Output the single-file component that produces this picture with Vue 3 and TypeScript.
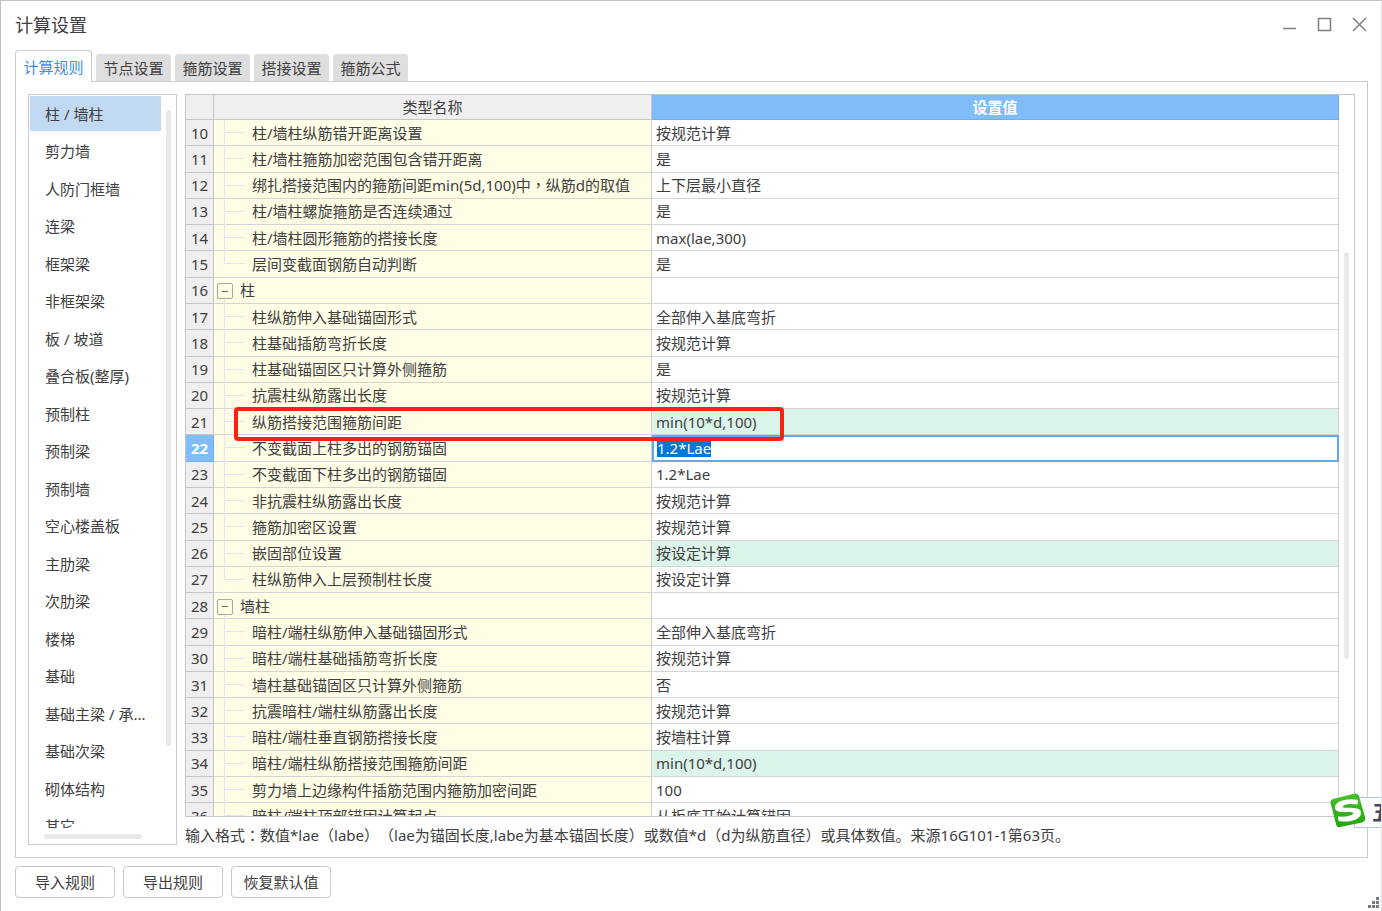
<script setup lang="ts">
import { nextTick, onMounted, ref } from 'vue'

interface Row {
  no: number
  name: string
  value: string
  group?: boolean
  last?: boolean
  changed?: boolean
}

const tabs = ['计算规则', '节点设置', '箍筋设置', '搭接设置', '箍筋公式']
const activeTab = ref(0)

const categories = [
  '柱 / 墙柱', '剪力墙', '人防门框墙', '连梁', '框架梁', '非框架梁', '板 / 坡道',
  '叠合板(整厚)', '预制柱', '预制梁', '预制墙', '空心楼盖板', '主肋梁', '次肋梁',
  '楼梯', '基础', '基础主梁 / 承...', '基础次梁', '砌体结构', '其它',
]
const activeCategory = ref(0)

const rows = ref<Row[]>([
  { no: 10, name: '柱/墙柱纵筋错开距离设置', value: '按规范计算' },
  { no: 11, name: '柱/墙柱箍筋加密范围包含错开距离', value: '是' },
  { no: 12, name: '绑扎搭接范围内的箍筋间距min(5d,100)中，纵筋d的取值', value: '上下层最小直径' },
  { no: 13, name: '柱/墙柱螺旋箍筋是否连续通过', value: '是' },
  { no: 14, name: '柱/墙柱圆形箍筋的搭接长度', value: 'max(lae,300)' },
  { no: 15, name: '层间变截面钢筋自动判断', value: '是', last: true },
  { no: 16, name: '柱', value: '', group: true },
  { no: 17, name: '柱纵筋伸入基础锚固形式', value: '全部伸入基底弯折' },
  { no: 18, name: '柱基础插筋弯折长度', value: '按规范计算' },
  { no: 19, name: '柱基础锚固区只计算外侧箍筋', value: '是' },
  { no: 20, name: '抗震柱纵筋露出长度', value: '按规范计算' },
  { no: 21, name: '纵筋搭接范围箍筋间距', value: 'min(10*d,100)', changed: true },
  { no: 22, name: '不变截面上柱多出的钢筋锚固', value: '1.2*Lae' },
  { no: 23, name: '不变截面下柱多出的钢筋锚固', value: '1.2*Lae' },
  { no: 24, name: '非抗震柱纵筋露出长度', value: '按规范计算' },
  { no: 25, name: '箍筋加密区设置', value: '按规范计算' },
  { no: 26, name: '嵌固部位设置', value: '按设定计算', changed: true },
  { no: 27, name: '柱纵筋伸入上层预制柱长度', value: '按设定计算', last: true },
  { no: 28, name: '墙柱', value: '', group: true },
  { no: 29, name: '暗柱/端柱纵筋伸入基础锚固形式', value: '全部伸入基底弯折' },
  { no: 30, name: '暗柱/端柱基础插筋弯折长度', value: '按规范计算' },
  { no: 31, name: '墙柱基础锚固区只计算外侧箍筋', value: '否' },
  { no: 32, name: '抗震暗柱/端柱纵筋露出长度', value: '按规范计算' },
  { no: 33, name: '暗柱/端柱垂直钢筋搭接长度', value: '按墙柱计算' },
  { no: 34, name: '暗柱/端柱纵筋搭接范围箍筋间距', value: 'min(10*d,100)', changed: true },
  { no: 35, name: '剪力墙上边缘构件插筋范围内箍筋加密间距', value: '100' },
  { no: 36, name: '暗柱/端柱顶部锚固计算起点', value: '从板底开始计算锚固' },
])
const editingNo = 22
const markedNo = 21

const hint = '输入格式：数值*lae（labe）（lae为锚固长度,labe为基本锚固长度）或数值*d（d为纵筋直径）或具体数值。来源16G101-1第63页。'

// Odd entries are full-width marks, which are set centred in their em box.
const pieces = (text: string): string[] => text.split(/([：，（）])/)

const editors = ref<HTMLInputElement[]>([])
onMounted(async () => {
  await nextTick()
  const el = editors.value[0]
  if (el) {
    el.focus({ preventScroll: true })
    el.select()
  }
})
</script>

<template>
  <main class="window">
    <header class="titlebar">
      <h1>计算设置</h1>
      <div class="controls">
        <button type="button" aria-label="最小化">
          <svg width="15" height="15" viewBox="0 0 15 15"><path d="M1 11.5H14" /></svg>
        </button>
        <button type="button" aria-label="最大化">
          <svg width="15" height="15" viewBox="0 0 15 15"><rect x="1.5" y="1.5" width="12" height="12" /></svg>
        </button>
        <button type="button" aria-label="关闭">
          <svg width="15" height="15" viewBox="0 0 15 15"><path d="M1 1L14 14M14 1L1 14" /></svg>
        </button>
      </div>
    </header>

    <div class="tabs" role="tablist">
      <button
        v-for="(tab, i) in tabs"
        :key="tab"
        type="button"
        role="tab"
        class="tab"
        :class="{ active: i === activeTab }"
        :aria-selected="i === activeTab"
        @click="activeTab = i"
      >{{ tab }}</button>
    </div>

    <section class="panel">
      <nav class="side">
        <div class="side-view">
          <ul>
            <li v-for="(c, i) in categories" :key="c">
              <button type="button" :class="{ active: i === activeCategory }" @click="activeCategory = i">{{ c }}</button>
            </li>
          </ul>
        </div>
        <i class="thumb side-v"></i>
        <i class="thumb side-h"></i>
      </nav>

      <div class="content">
        <div class="grid">
          <div class="grid-view">
            <table>
              <colgroup>
                <col class="c-no" />
                <col class="c-name" />
                <col />
              </colgroup>
              <thead>
                <tr>
                  <th></th>
                  <th>类型名称</th>
                  <th class="current">设置值</th>
                </tr>
              </thead>
              <tbody>
                <tr v-for="r in rows" :key="r.no">
                  <th scope="row" :class="{ current: r.no === editingNo }">{{ r.no }}</th>
                  <td class="name" :class="r.group ? 'group' : r.last ? 'leaf last' : 'leaf'">
                    <button v-if="r.group" type="button" class="toggle" :aria-label="'折叠' + r.name"></button><span v-for="(p, i) in pieces(r.name)" :key="i" :class="{ punct: i % 2 === 1 }">{{ p }}</span>
                    <span v-if="r.no === markedNo" class="mark"></span>
                  </td>
                  <td v-if="r.no === editingNo" class="value editing">
                    <input ref="editors" v-model="r.value" type="text" :aria-label="r.name" />
                  </td>
                  <td v-else class="value" :class="{ changed: r.changed }">{{ r.value }}</td>
                </tr>
              </tbody>
            </table>
          </div>
          <i class="thumb grid-v"></i>
        </div>
        <p class="hint"><span v-for="(p, i) in pieces(hint)" :key="i" :class="{ punct: i % 2 === 1 }">{{ p }}</span></p>
      </div>
    </section>

    <footer class="actions">
      <button type="button">导入规则</button>
      <button type="button">导出规则</button>
      <button type="button">恢复默认值</button>
    </footer>

    <svg class="grip" width="12" height="12" viewBox="0 0 12 12">
      <path d="M8 0h3v3h-3zM4 4h3v3h-3zM8 4h3v3h-3zM0 8h3v3h-3zM4 8h3v3h-3zM8 8h3v3h-3z" />
    </svg>

    <aside class="ime">
      <div class="ime-bar">五</div>
      <svg class="ime-logo" width="36" height="36" viewBox="0 0 36 36">
        <defs>
          <linearGradient id="imeGreen" x1="0" y1="0" x2="0" y2="1">
            <stop offset="0" stop-color="#45c32a" />
            <stop offset="1" stop-color="#22a50c" />
          </linearGradient>
        </defs>
        <path fill="url(#imeGreen)" d="M3 6L25 0.5Q28 0 29 3L35 24Q36 28 32 29.500L10 34Q7 35 6 31L0.500 10Q0 7 3 6Z" />
        <path fill="#fff" d="M28 7C18 5 5 7.500 5 14.500C5 21 17 18.500 22.500 19.500C25.500 20.500 20 24.500 8 23.500L8.500 28C20 30 31 26.500 31 20C31 13 18.500 15.500 13.500 14.500C10.500 13 17 9.500 27.500 11.500Z" />
      </svg>
    </aside>
  </main>
</template>

<style>
body {
  margin: 0;
}
</style>

<style scoped>
* {
  box-sizing: border-box;
}

.window {
  position: relative;
  display: flex;
  flex-direction: column;
  height: 100vh;
  overflow: hidden;
  padding: 0 13px 13px 14px;
  border: 1px solid #c0c0c0;
  border-right-color: #e4e4e4;
  border-bottom: 0;
  background: #fff;
  color: #404040;
  font: 15px/20px 'Noto Sans', 'Noto Sans CJK SC', sans-serif;
  text-spacing-trim: space-all;
}

button {
  padding: 0;
  border: 0;
  background: none;
  color: inherit;
  font: inherit;
  white-space: nowrap;
}

.punct {
  font-family: 'Noto Sans CJK TC', sans-serif;
}

.titlebar {
  display: flex;
  justify-content: space-between;
  align-items: center;
  height: 47px;
  margin-bottom: 2px;
}

h1 {
  margin: 0;
  font-size: 18px;
  font-weight: 400;
}

.controls {
  display: flex;
  gap: 20px;
  padding-right: 1px;
}

.controls button {
  height: 15px;
  width: 15px;
}

.controls svg {
  display: block;
  fill: none;
  stroke: #808080;
  stroke-width: 1.500;
}

.tabs {
  position: relative;
  display: flex;
  align-items: flex-end;
  gap: 4px;
  height: 32px;
  margin-bottom: -1px;
}

.tab {
  width: 75px;
  height: 27px;
  margin-bottom: 1px;
  border-radius: 4px 4px 0 0;
  background: #dedede;
}

.tab.active {
  width: 77px;
  height: 32px;
  margin-bottom: 0;
  border: 1px solid #c8cdd2;
  border-bottom: 0;
  background: #fff;
  color: #3d8fee;
}

.panel {
  display: flex;
  flex: 1;
  gap: 8px;
  min-height: 0;
  padding: 12px;
  border: 1px solid #c8cdd2;
}

.side {
  position: relative;
  flex: none;
  width: 149px;
  border: 1px solid #ccc;
  padding: 1px 14px 16px 1px;
}

.side-view {
  height: 100%;
  overflow: hidden;
}

.side ul {
  display: flex;
  flex-direction: column;
  justify-content: space-between;
  height: 748px;
  margin: 0;
  padding: 0;
  list-style: none;
}

.side li button {
  display: block;
  width: 131px;
  height: 35px;
  padding-left: 15px;
  text-align: left;
}

.side li .active {
  background: #c2d9f2;
}

.thumb {
  position: absolute;
  border-radius: 3px;
  background: #e9e9e9;
}

.side-v {
  top: 15px;
  right: 5px;
  bottom: 98px;
  width: 5px;
}

.side-h {
  left: 15px;
  right: 34px;
  bottom: 5px;
  height: 5px;
}

.content {
  display: flex;
  flex: 1;
  flex-direction: column;
  min-width: 0;
}

.grid {
  position: relative;
  flex: 1;
  min-height: 0;
  padding-right: 15px;
  border: 1px solid #c6c6c6;
}

.grid-view {
  height: 100%;
  overflow: hidden;
}

.grid-v {
  top: 157px;
  right: 5px;
  bottom: 157px;
  width: 5px;
}

table {
  width: 100%;
  height: 735px;
  table-layout: fixed;
  border-collapse: separate;
  border-spacing: 0;
}

.c-no {
  width: 28px;
}

.c-name {
  width: 438px;
}

th,
td {
  padding: 0;
  border-right: 1px solid #d0d0d0;
  border-bottom: 1px solid #d4d4d4;
  font-weight: 400;
  white-space: nowrap;
}

th {
  border-color: #c6c6c6;
  background: #efefef;
}

thead th {
  height: 25px;
}

th.current {
  border-color: #70aef0;
  background: #80bbfa;
  color: #fff;
  font-weight: 700;
}

.name {
  position: relative;
  background: #fffde6;
}

.leaf {
  padding-left: 38px;
}

.leaf::before,
.group::before {
  content: '';
  position: absolute;
  left: 10px;
  top: 0;
  bottom: -1px;
  border-left: 1px solid #e4e4ec;
}

.group::before {
  top: 20px;
}

.last::before {
  bottom: 50%;
}

.leaf::after {
  content: '';
  position: absolute;
  left: 10px;
  top: 12px;
  width: 21px;
  border-top: 1px solid #e4e4ec;
}

.group {
  padding-left: 3px;
}

.toggle {
  position: relative;
  display: inline-block;
  width: 16px;
  height: 16px;
  margin-right: 7px;
  border: 1px solid #a8a8a0;
  border-radius: 2px;
  vertical-align: -2px;
  background: linear-gradient(#666, #666) center / 6px 1px no-repeat #fffde6;
}

.mark {
  position: absolute;
  z-index: 2;
  top: -2px;
  left: 20px;
  right: -133px;
  height: 34px;
  border: 4px solid #ff2014;
  border-radius: 4px;
  pointer-events: none;
}

.value {
  padding-left: 4px;
}

.changed {
  background: #dcf5ea;
}

.editing {
  padding: 0;
  border: 2px solid #66a6ea;
}

input {
  display: block;
  width: 100%;
  height: 17px;
  padding: 0 3px;
  border: 0;
  outline: 0;
  background: #fff;
  color: inherit;
  font: inherit;
  line-height: 17px;
}

input::selection {
  background: #0078d7;
  color: #fff;
}

.hint {
  height: 28px;
  margin: 0;
  padding-top: 8px;
  overflow: hidden;
  line-height: 20px;
  white-space: nowrap;
}

.actions {
  display: flex;
  gap: 8px;
  padding-top: 8px;
}

.actions button {
  width: 100px;
  height: 32px;
  border: 1px solid #c8c8c8;
  border-radius: 4px;
  background: #fff;
}

.grip {
  position: absolute;
  right: 1px;
  bottom: 2px;
  fill: #737a82;
}

.ime {
  position: absolute;
  right: 0;
  bottom: 82px;
  width: 51px;
  height: 36px;
}

.ime-bar {
  position: absolute;
  top: 4px;
  left: 24px;
  right: -1px;
  height: 31px;
  padding-left: 17px;
  overflow: hidden;
  border: 1px solid #b8c8d8;
  border-right: 0;
  background: #fbfdff;
  color: #44495e;
  font-size: 21px;
  font-weight: 700;
  line-height: 28px;
}

.ime-logo {
  position: absolute;
  top: 0;
  left: 0;
}
</style>
